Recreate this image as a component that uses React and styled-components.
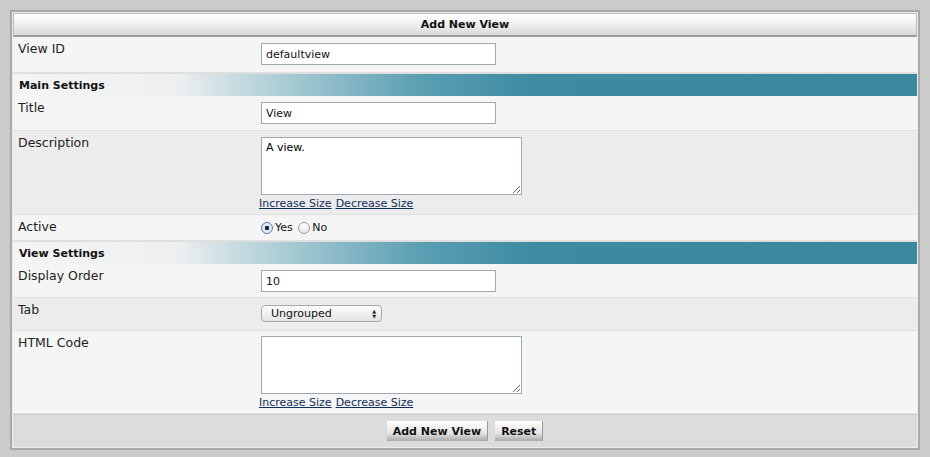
import React from "react";
import styled, { createGlobalStyle } from "styled-components";

const Global = createGlobalStyle`
  body { margin: 0; background: #cbcbcb; font-family: "DejaVu Sans", Verdana, sans-serif; }
`;
const Page = styled.div`padding: 10px 10px 9px 10px;`;
const Panel = styled.div`
  border: 2px solid #a9a9a9; background: #ececec; padding: 1px;
  display: flex; flex-direction: column;
`;
const Header = styled.div`
  height: 21px; display: flex; align-items: center; justify-content: center;
  background: linear-gradient(#ffffff, #f3f3f3 40%, #d9d9d9);
  border: 1px solid #bdbdbd; border-bottom: 2px solid #9a9a9a;
  font-size: 11px; font-weight: bold; color: #111;
`;
const Row = styled.div`
  display: grid; grid-template-columns: 248px 1fr;
  height: ${p => p.h}px; box-sizing: border-box;
  background: ${p => (p.alt ? "#ececec" : "#f5f5f5")};
  border-bottom: 1px solid #e0e0e0;
`;
const Label = styled.div`padding: 4px 0 0 5px; font-size: 12.5px; color: #222;`;
const Field = styled.div`padding-top: ${p => p.pt ?? 6}px; display: flex; flex-direction: column; align-items: flex-start;`;
const Section = styled.div`
  height: 22px; display: flex; align-items: center; padding-left: 6px;
  font-size: 11px; font-weight: bold; color: #111;
  background: linear-gradient(90deg, #f4f4f4 0%, #eef0f0 18%, #9fc5cf 32%, #5a9fb2 45%, #3e8aa2 58%, #3a87a0 100%);
  border-top: 1px solid #ddd;
`;
const Input = styled.input`
  width: 235px; height: 22px; box-sizing: border-box; border: 1px solid #9eaab2;
  font: 11px "DejaVu Sans", sans-serif; padding: 2px 4px; color: #111; background: #fff;
`;
const Area = styled.textarea`
  width: 261px; height: 58px; box-sizing: border-box; border: 1px solid #9eaab2;
  font: 11px "DejaVu Sans", sans-serif; padding: 3px 4px; resize: both; margin: 0;
`;
const Links = styled.div`display: flex; gap: 4px; margin: 2px 0 0 -2px; font-size: 11px;`;
const A = styled.a`color: #0f2e5c; text-decoration: underline;`;
const Radio = styled.span`
  width: 12px; height: 12px; border-radius: 50%; box-sizing: border-box;
  border: 1px solid ${p => (p.on ? "#5a7fb3" : "#9a9a9a")};
  background: ${p => (p.on ? "radial-gradient(circle, #222 0 2px, #dfeaf8 2.5px)" : "linear-gradient(#fff,#e6e6e6)")};
  display: inline-block;
`;
const RadioGroup = styled.div`display: flex; align-items: center; gap: 2px; font-size: 11px; color: #111;`;
const Select = styled.div`
  width: 121px; height: 17px; box-sizing: border-box; border: 1px solid #a8a8a8; border-radius: 4px;
  background: linear-gradient(#fdfdfd, #e3e3e3); display: flex; align-items: center; justify-content: space-between;
  padding: 0 5px 0 9px; font-size: 11px; color: #111;
`;
const Arrows = styled.span`display: flex; flex-direction: column; font-size: 5px; line-height: 5px; color: #222;`;
const Footer = styled.div`
  height: 32px; display: flex; justify-content: center; align-items: center; gap: 7px;
  background: #dcdcdc; border-top: 1px solid #c8c8c8;
`;
const Button = styled.button`
  height: 20px; padding: 0 6px; border: none; border-right: 1px solid #999;
  background: linear-gradient(#ffffff, #e6e6e6 60%, #a9a9a9);
  font: bold 11px "DejaVu Sans", sans-serif; color: #111;
`;

export default function App() {
  return (
    <Page>
      <Global />
      <Panel>
        <Header>Add New View</Header>
        <Row h={36}><Label>View ID</Label><Field><Input defaultValue="defaultview" /></Field></Row>
        <Section>Main Settings</Section>
        <Row h={35}><Label>Title</Label><Field><Input defaultValue="View" /></Field></Row>
        <Row h={84} alt><Label>Description</Label><Field><Area defaultValue="A view." /><Links><A>Increase Size</A><A>Decrease Size</A></Links></Field></Row>
        <Row h={26}><Label>Active</Label><Field pt={6}><RadioGroup><Radio on />Yes&nbsp;<Radio />No</RadioGroup></Field></Row>
        <Section>View Settings</Section>
        <Row h={34}><Label>Display Order</Label><Field><Input defaultValue="10" /></Field></Row>
        <Row h={33} alt><Label>Tab</Label><Field pt={7}><Select>Ungrouped<Arrows><span>▲</span><span>▼</span></Arrows></Select></Field></Row>
        <Row h={83}><Label>HTML Code</Label><Field pt={5}><Area /><Links><A>Increase Size</A><A>Decrease Size</A></Links></Field></Row>
        <Footer><Button>Add New View</Button><Button>Reset</Button></Footer>
      </Panel>
    </Page>
  );
}
